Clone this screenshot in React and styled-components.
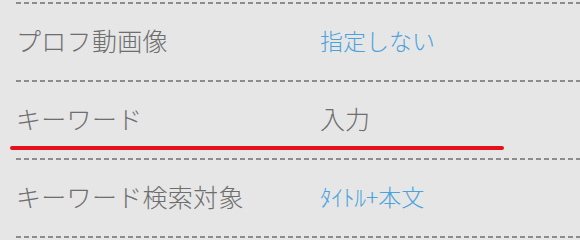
import React from "react";
import styled, { createGlobalStyle } from "styled-components";

const GlobalStyle = createGlobalStyle`
  body {
    margin: 0;
    background: #e6e6e6;
    font-family: "Noto Sans CJK JP", "Noto Sans", sans-serif;
  }
`;

const List = styled.div`
  padding-top: 2px;
  width: 580px;
`;

const Divider = styled.div`
  height: 2px;
  margin-left: 16px;
  background: repeating-linear-gradient(to right, #8c8c8c 0 5px, transparent 5px 8px);
`;

const Row = styled.div`
  position: relative;
  display: grid;
  grid-template-columns: 304px 1fr;
  align-items: center;
  height: 76px;
  padding-left: 16px;
  padding-bottom: 4px;
  box-sizing: border-box;
`;

const Label = styled.span`
  font-size: 25px;
  font-weight: 300;
  color: #6e6e6e;
  letter-spacing: 0.3px;
`;

const Value = styled.span`
  font-size: ${p => (p.$link ? "23px" : "25px")};
  font-weight: 300;
  color: ${p => (p.$link ? "#4ba2dc" : "#6e6e6e")};
`;

const Marker = styled.div`
  position: absolute;
  left: 10px;
  top: 64px;
  width: 494px;
  height: 4px;
  border-radius: 2px;
  background: #e3121a;
`;

const rows = [
  { label: "プロフ動画像", value: "指定しない", link: true },
  { label: "キーワード", value: "入力", link: false, marked: true },
  { label: "キーワード検索対象", value: "ﾀｲﾄﾙ+本文", link: true },
];

const App = () => {
  return (
    <>
      <GlobalStyle />
      <List>
        <Divider />
        {rows.map(r => (
          <React.Fragment key={r.label}>
            <Row>
              <Label>{r.label}</Label>
              <Value $link={r.link}>{r.value}</Value>
              {r.marked && <Marker />}
            </Row>
            <Divider />
          </React.Fragment>
        ))}
      </List>
    </>
  );
};

export default App;
